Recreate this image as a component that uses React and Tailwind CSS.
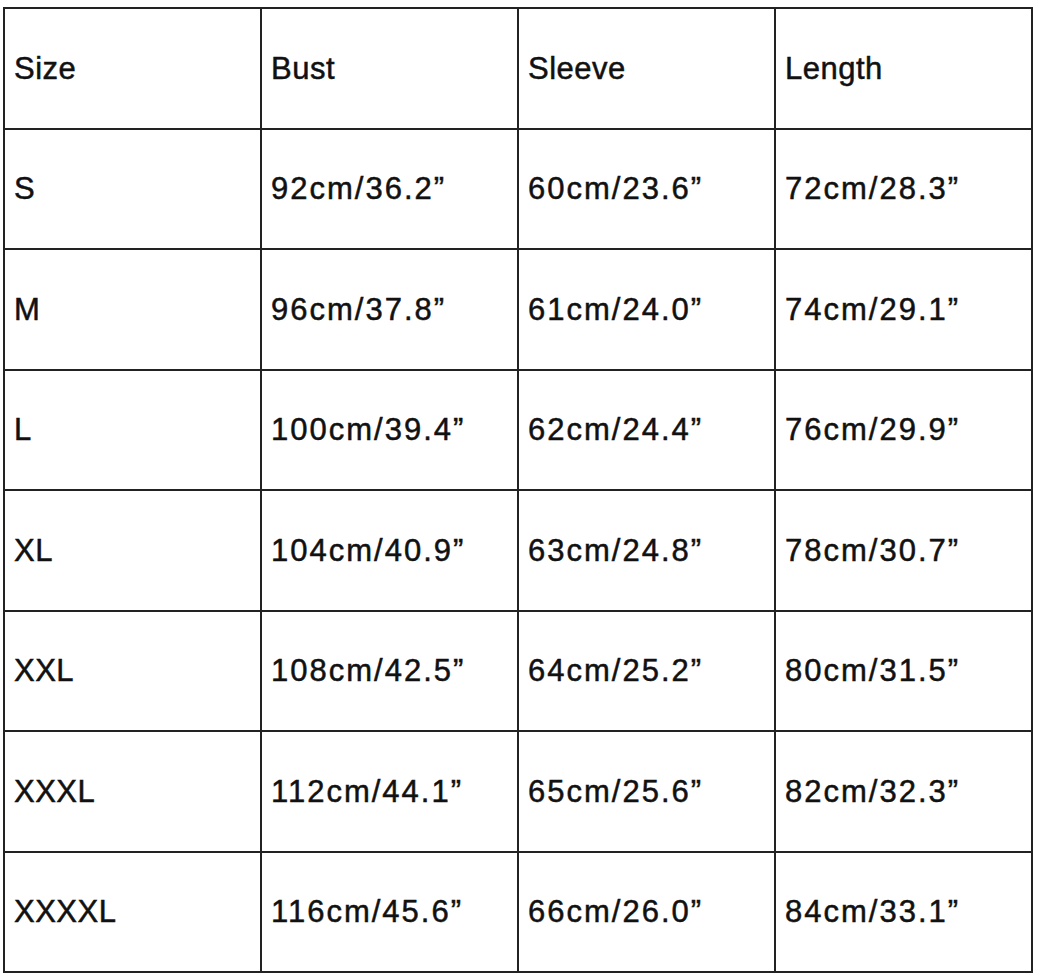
import React from "react";

const headers = ["Size", "Bust", "Sleeve", "Length"];

const rows = [
  ["S", "92cm/36.2”", "60cm/23.6”", "72cm/28.3”"],
  ["M", "96cm/37.8”", "61cm/24.0”", "74cm/29.1”"],
  ["L", "100cm/39.4”", "62cm/24.4”", "76cm/29.9”"],
  ["XL", "104cm/40.9”", "63cm/24.8”", "78cm/30.7”"],
  ["XXL", "108cm/42.5”", "64cm/25.2”", "80cm/31.5”"],
  ["XXXL", "112cm/44.1”", "65cm/25.6”", "82cm/32.3”"],
  ["XXXXL", "116cm/45.6”", "66cm/26.0”", "84cm/33.1”"],
];

// label cells (header row + size column) sit tighter than the measurements
const Cell = ({ children, wide }) => (
  <div
    className={`flex items-center pl-[9px] border-r-2 border-b-2 border-[#222] ${
      wide ? "tracking-[2px]" : "tracking-[0.5px]"
    }`}
  >
    {children}
  </div>
);

const App = () => {
  return (
    <div className="w-[1040px] h-[976px] bg-white pt-[7px] pl-[3px]">
      <div
        className="grid grid-cols-[257px_257px_257px_257px] grid-rows-8 w-[1030px] h-[966px] border-l-2 border-t-2 border-[#222] text-[31px] leading-none text-[#111] [-webkit-text-stroke:0.5px_#111]"
        style={{ fontFamily: '"Liberation Sans", Arial, sans-serif' }}
      >
        {headers.map((h) => (
          <Cell key={h}>{h}</Cell>
        ))}
        {rows.map((row) =>
          row.map((v, i) => (
            <Cell key={row[0] + i} wide={i > 0}>
              {v}
            </Cell>
          ))
        )}
      </div>
    </div>
  );
};

export default App;
